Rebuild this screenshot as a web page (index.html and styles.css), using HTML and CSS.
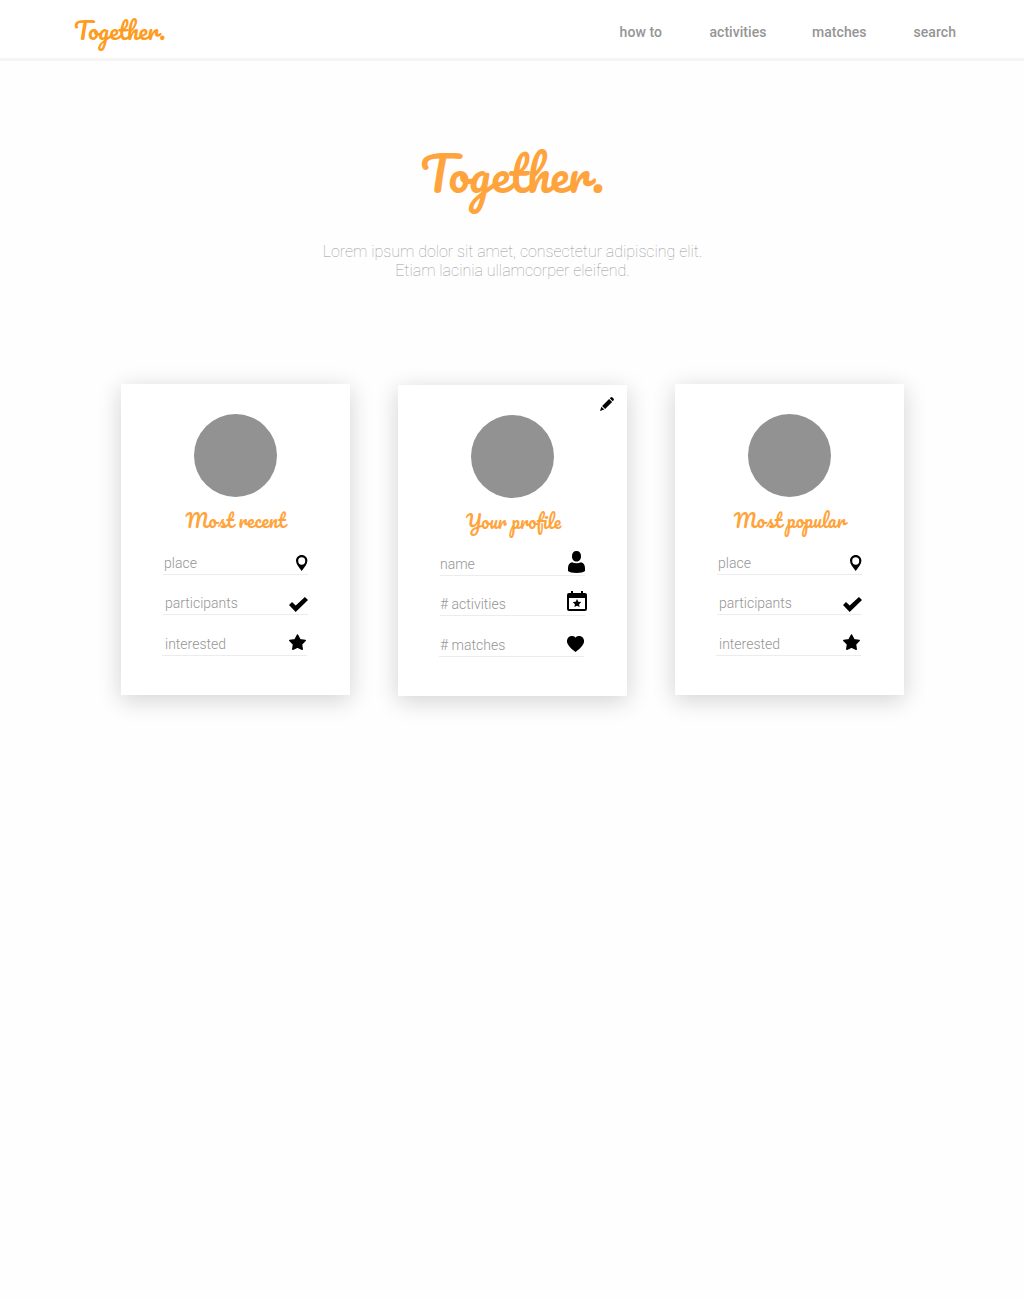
FILE: index.html
```html
<!DOCTYPE html>
<html lang="en">
<head>
<meta charset="utf-8">
<title>Together.</title>
<link rel="stylesheet" href="styles.css">
</head>
<body>
<svg class="sprite" aria-hidden="true">
  <symbol id="pin" viewBox="0 0 12 16"><path fill-rule="evenodd" d="M5.700 0C2.500 0 0 2.500 0 5.800 0 9 3 12.500 5.700 16c2.700-3.500 5.700-7 5.700-10.200C11.400 2.500 9 0 5.700 0Zm0 2.300a3.500 3.700 0 1 1 0 7.400a3.500 3.700 0 1 1 0-7.400Z"/></symbol>
  <symbol id="check" viewBox="0 0 19 15"><path d="M0 8.100 3 5.100 6.700 8.600 15.900 0 19 3.100 6.700 15Z"/></symbol>
  <symbol id="star" viewBox="0 0 17 16"><path d="M8.500 1 10.900 5.700 16.200 6.500 12.500 10.300 13.200 15.200 8.500 13 3.800 15.200 4.500 10.300.8 6.500 6.100 5.700Z" stroke="#000" stroke-width="1.500" stroke-linejoin="round"/></symbol>
  <symbol id="person" viewBox="0 0 17 22"><path d="M8.500 0C11.500 0 13 2 13 5.200 13 8.500 11 10.500 8.500 10.500S4 8.500 4 5.200C4 2 5.500 0 8.500 0ZM4 11.200C6.500 12.700 10.500 12.700 13 11.200 15.700 11.700 17 14 17 17v3C15 22.600 2 22.600 0 20v-3c0-3 1.300-5.300 4-5.800Z"/></symbol>
  <symbol id="calendar" viewBox="0 0 20 20"><path fill-rule="evenodd" d="M4 0h2v2h8V0h2v2h2a2 2 0 0 1 2 2v14a2 2 0 0 1-2 2H2a2 2 0 0 1-2-2V4a2 2 0 0 1 2-2h2ZM2 7v11h16V7Z"/><path d="m10 8 1.300 2.700 3 .4-2.200 2.100.5 2.900-2.600-1.400-2.600 1.400.5-2.900-2.200-2.100 3-.4Z"/></symbol>
  <symbol id="heart" viewBox="0 0 17 16"><path d="M8.500 1.700C10-.5 13.700-.6 15.500 1.200c2 2 2 5.100.5 7.300-1.500 2.500-4.500 5.500-7.500 7.500C5.500 14 2.500 11 1 8.500-.5 6.300-.5 3.200 1.500 1.200 3.300-.6 7-.5 8.500 1.700Z"/></symbol>
  <symbol id="pencil" viewBox="0 0 14 14"><path d="m9.800 1.300.7-.7c.7-.7 1.300-.7 2 0l.9.900c.7.700.7 1.300 0 2l-.7.700ZM9.100 1.900l3 3-7 7-3-3ZM1.400 9.700l2.900 2.900L0 14Z"/></symbol>
</svg>

<header class="topbar">
  <a class="brand">Together.</a>
  <nav class="nav">
    <a class="nav-howto">how to</a>
    <a class="nav-activities">activities</a>
    <a class="nav-matches">matches</a>
    <a class="nav-search">search</a>
  </nav>
</header>

<main>
  <section class="hero">
    <h1 class="hero-title">Together.</h1>
    <p class="hero-text">Lorem ipsum dolor sit amet, consectetur adipiscing elit.<br>Etiam lacinia ullamcorper eleifend.</p>
  </section>

  <section class="cards">
    <article class="card">
      <div class="avatar"></div>
      <h2 class="card-title">Most recent</h2>
      <ul class="rows">
        <li class="row"><span>place</span><svg class="icon pin"><use href="#pin"/></svg></li>
        <li class="row indent"><span>participants</span><svg class="icon check"><use href="#check"/></svg></li>
        <li class="row last"><span>interested</span><svg class="icon star"><use href="#star"/></svg></li>
      </ul>
    </article>

    <article class="card profile">
      <svg class="icon pencil"><use href="#pencil"/></svg>
      <div class="avatar"></div>
      <h2 class="card-title">Your profile</h2>
      <ul class="rows">
        <li class="row"><span>name</span><svg class="icon person"><use href="#person"/></svg></li>
        <li class="row"><span># activities</span><svg class="icon calendar"><use href="#calendar"/></svg></li>
        <li class="row last"><span># matches</span><svg class="icon heart"><use href="#heart"/></svg></li>
      </ul>
    </article>

    <article class="card">
      <div class="avatar"></div>
      <h2 class="card-title">Most popular</h2>
      <ul class="rows">
        <li class="row"><span>place</span><svg class="icon pin"><use href="#pin"/></svg></li>
        <li class="row indent"><span>participants</span><svg class="icon check"><use href="#check"/></svg></li>
        <li class="row last"><span>interested</span><svg class="icon star"><use href="#star"/></svg></li>
      </ul>
    </article>
  </section>
</main>
</body>
</html>
```
FILE: styles.css
```css
* { box-sizing: border-box; }

body {
  margin: 0;
  min-height: 1300px;
  background: #fefefe;
  font-family: Roboto, "Liberation Sans", sans-serif;
}

.sprite { display: none; }
.icon { display: block; flex: none; fill: #000; }

.topbar {
  display: flex;
  align-items: center;
  justify-content: space-between;
  height: 61px;
  padding: 2px 68px 0 74px;
  background: #fff;
  border-bottom: 3px solid #f5f5f5;
}

.brand, .hero-title, .card-title {
  font-family: Pacifico, cursive;
  font-weight: 400;
  white-space: nowrap;
}

.brand {
  color: #ff9c20;
  font-size: 23.500px;
  line-height: 34px;
  letter-spacing: -0.3px;
}

.nav {
  display: flex;
  padding-top: 3px;
  color: #959595;
  font-size: 14px;
  font-weight: 500;
  line-height: 20px;
  letter-spacing: 0.050px;
}
.nav-activities { margin-left: 47.500px; }
.nav-matches { margin-left: 45.500px; }
.nav-search { margin-left: 47px; }

.hero { padding-top: 83px; text-align: center; }

.hero-title {
  margin: 0;
  height: 80px;
  color: #ffa43c;
  font-size: 47px;
  line-height: 58px;
  letter-spacing: -0.500px;
}

.hero-text {
  margin: 18px 0 0 1px;
  color: #999;
  font-size: 16px;
  font-weight: 100;
  line-height: 19px;
}

.cards {
  display: flex;
  gap: 48px;
  align-items: flex-start;
  padding: 104px 0 0 121px;
}

.card {
  position: relative;
  width: 229px;
  height: 311px;
  padding-top: 30px;
  background: #fff;
  box-shadow: 0 5px 22px rgba(30, 15, 20, 0.19);
}
.profile { margin-top: 1px; }

.avatar {
  width: 83px;
  height: 83px;
  margin: 0 auto;
  border-radius: 50%;
  background: #929292;
}

.card-title {
  height: 38px;
  margin: 0;
  color: #ffa43c;
  font-size: 18.500px;
  line-height: 47px;
  text-align: center;
  letter-spacing: 0.1px;
}
.profile .card-title {
  padding-left: 2px;
  font-size: 18px;
  letter-spacing: 0;
}

.rows { margin: 0 42px; padding: 0; list-style: none; }

.row {
  display: flex;
  align-items: flex-end;
  justify-content: space-between;
  height: 40px;
  padding-left: 1px;
  border-bottom: 1px solid #ececec;
  color: #959595;
  font-size: 14px;
  font-weight: 300;
  line-height: 22px;
}
.indent { padding-left: 2px; }
.last { height: 41px; padding-left: 3px; margin: 0 1px 0 -1px; }
.profile .row { padding-left: 0; }
.profile .last { padding-left: 1px; }

.pin { width: 12px; height: 16px; margin-bottom: 3px; }
.check { width: 19px; height: 15px; margin-bottom: 2px; }
.star { width: 17px; height: 16px; margin: 0 1px 5px 0; }
.person { width: 17px; height: 22px; margin-bottom: 2px; }
.calendar { width: 20px; height: 20px; margin: 0 -2px 4px 0; }
.heart { width: 17px; height: 16px; margin-bottom: 4px; }
.pencil {
  position: absolute;
  top: 12px;
  right: 13px;
  width: 14px;
  height: 14px;
}
```
